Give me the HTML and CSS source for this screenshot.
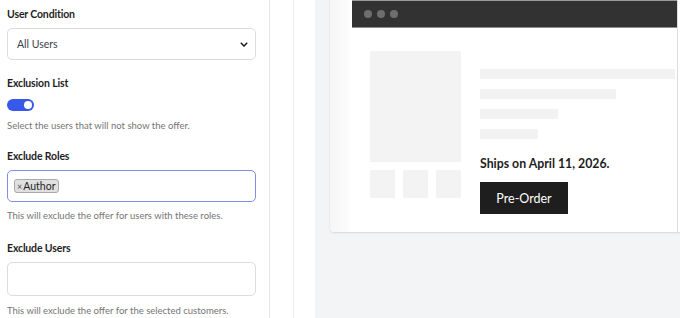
FILE: index.html
```html
<!DOCTYPE html>
<html>
<head>
<meta charset="utf-8">
<link rel="stylesheet" href="styles.css">
</head>
<body>
<div class="app">
  <aside class="sidebar">
    <div class="field first">
      <div class="label">User Condition</div>
      <div class="select">
        <span>All Users</span>
        <svg class="chev" width="8" height="5" viewBox="0 0 8 5"><path d="M0.8 0.8l3.2 3.2L7.2 0.8" fill="none" stroke="#1e1e1e" stroke-width="1.5"/></svg>
      </div>
    </div>
    <div class="field">
      <div class="label toggle-label">Exclusion List</div>
      <div class="toggle"><span class="knob"></span></div>
      <div class="help">Select the users that will not show the offer.</div>
    </div>
    <div class="field">
      <div class="label">Exclude Roles</div>
      <div class="input focused"><span class="tag"><span class="x">×</span>Author</span></div>
      <div class="help tight">This will exclude the offer for users with these roles.</div>
    </div>
    <div class="field last">
      <div class="label">Exclude Users</div>
      <div class="input tall"></div>
      <div class="help">This will exclude the offer for the selected customers.</div>
    </div>
  </aside>
  <div class="strip"></div>
  <div class="strip2"></div>
  <main class="canvas">
    <div class="card">
      <div class="mock">
        <div class="mock-bar">
          <span class="dot"></span><span class="dot"></span><span class="dot"></span>
        </div>
        <div class="mock-body">
          <div class="gallery">
            <div class="hero"></div>
            <div class="thumbs"><div class="thumb"></div><div class="thumb"></div><div class="thumb"></div></div>
          </div>
          <div class="info">
            <div class="ph w1"></div>
            <div class="ph w2"></div>
            <div class="ph w3"></div>
            <div class="ph w4"></div>
            <div class="ships">Ships on April 11, 2026.</div>
            <button class="btn">Pre-Order</button>
          </div>
        </div>
      </div>
    </div>
  </main>
</div>
</body>
</html>
```

FILE: styles.css
```css
html, body {
  margin: 0;
  padding: 0;
  height: 318px;
  overflow: hidden;
  background: #fff;
  font-family: Lato, "Noto Sans", sans-serif;
}
.app {
  display: flex;
  height: 318px;
}
.sidebar {
  width: 270px;
  flex: none;
  box-sizing: border-box;
  border-right: 1px solid #e2e4e7;
  padding: 0 13px 0 7px;
  background: #fff;
}
.field {
  margin-top: 15px;
}
.field.first {
  margin-top: 6px;
}
.field.last {
  margin-top: 17px;
}
.label {
  font-size: 10.5px;
  line-height: 16px;
  font-weight: 700;
  letter-spacing: -0.15px;
  color: #1e1e1e;
  margin-bottom: 6px;
}
.toggle-label {
  margin-bottom: 8px;
}
.select {
  height: 32px;
  box-sizing: border-box;
  border: 1px solid #dcdcde;
  border-radius: 5px;
  display: flex;
  align-items: center;
  justify-content: space-between;
  padding: 0 7px 0 9px;
  font-size: 10.5px;
  color: #3c434a;
}
.toggle {
  width: 27px;
  height: 12px;
  border-radius: 6px;
  background: #3858e9;
  position: relative;
}
.knob {
  position: absolute;
  right: 2px;
  top: 2px;
  width: 8px;
  height: 8px;
  border-radius: 50%;
  background: #fff;
}
.help {
  font-size: 9.5px;
  line-height: 14px;
  color: #757575;
  margin-top: 8px;
}
.help.tight {
  margin-top: 7px;
}
.input {
  height: 32px;
  box-sizing: border-box;
  border: 1px solid #dcdcde;
  border-radius: 5px;
  display: flex;
  align-items: center;
  padding: 0 6px;
}
.input.focused {
  border-color: #7f8fe6;
}
.input.tall {
  height: 34px;
}
.tag {
  display: inline-flex;
  align-items: center;
  height: 14px;
  box-sizing: border-box;
  padding: 0 3px 0 2px;
  background: #e0e0e0;
  border: 1px solid #aaa;
  border-radius: 3px;
  font-size: 10.5px;
  color: #1e1e1e;
}
.tag .x {
  font-size: 9px;
  color: #555;
  margin-right: 1px;
}
.strip {
  width: 23px;
  flex: none;
  border-right: 1px solid #ececec;
}
.strip2 {
  width: 21px;
  flex: none;
}
.canvas {
  flex: 1;
  background: #f3f4f6;
  padding-left: 15px;
  min-width: 0;
}
.card {
  height: 232px;
  background: linear-gradient(to right, #f6f6f7 0, #fbfbfb 15px, #fff 22px);
  border-bottom-left-radius: 4px;
  box-shadow: 0 1px 2px rgba(0,0,0,0.12);
  padding-left: 22px;
  box-sizing: border-box;
}
.mock {
  height: 232px;
  background: #fff;
  border-right: 1px solid #ddd;
  margin-right: 2px;
}
.mock-bar {
  height: 28px;
  box-sizing: border-box;
  background: #323232;
  border-top: 1px solid #9a9a9a;
  border-bottom: 1px solid #8c8c8c;
  display: flex;
  align-items: center;
  gap: 5px;
  padding-left: 12px;
}
.dot {
  width: 8px;
  height: 8px;
  border-radius: 50%;
  background: #6e6e6e;
}
.mock-body {
  display: flex;
  gap: 19px;
  padding: 23px 0 0 18px;
}
.gallery {
  width: 91px;
  flex: none;
}
.hero {
  height: 111px;
  background: #f3f3f3;
}
.thumbs {
  display: flex;
  gap: 8px;
  margin-top: 8px;
}
.thumb {
  width: 25px;
  height: 28px;
  background: #f3f3f3;
}
.info {
  flex: 1;
  padding-top: 18px;
}
.ph {
  height: 10px;
  background: #f2f2f2;
  margin-bottom: 10px;
}
.w1 { width: 195px; }
.w2 { width: 136px; }
.w3 { width: 78px; }
.w4 { width: 58px; }
.ships {
  margin-top: 16px;
  font-size: 12.3px;
  line-height: 18px;
  font-weight: 700;
  color: #1e1e1e;
}
.btn {
  display: block;
  margin-top: 9px;
  width: 88px;
  height: 32px;
  border: 0;
  background: #1e1e1e;
  color: #fff;
  font-family: Lato, "Noto Sans", sans-serif;
  font-size: 12.5px;
  padding: 0;
}
```
